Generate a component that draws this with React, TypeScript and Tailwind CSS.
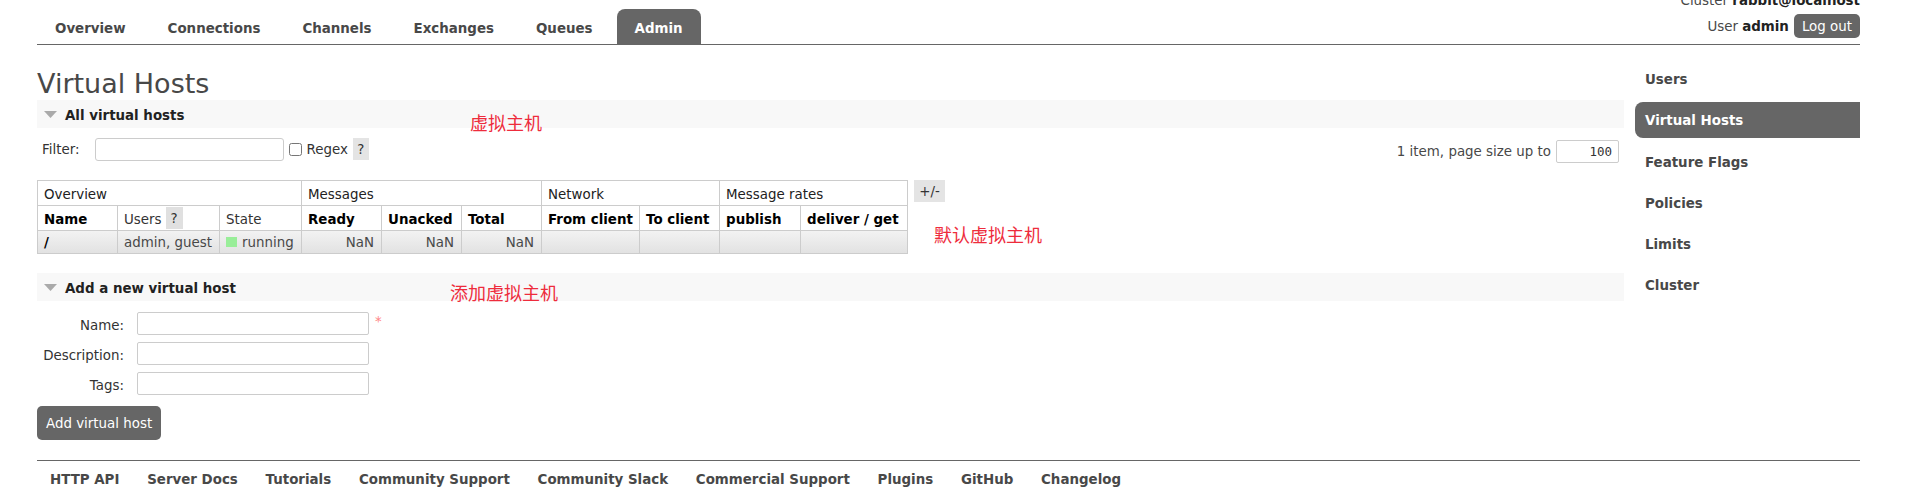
const navItems = ["Overview", "Connections", "Channels", "Exchanges", "Queues", "Admin"];
const sideItems = ["Users", "Virtual Hosts", "Feature Flags", "Policies", "Limits", "Cluster"];
const footerLinks = [
  "HTTP API",
  "Server Docs",
  "Tutorials",
  "Community Support",
  "Community Slack",
  "Commercial Support",
  "Plugins",
  "GitHub",
  "Changelog",
];

function SectionBar({ title }: { title: string }) {
  return (
    <div className="h-[28px] bg-[#f8f8f8] flex items-center pl-[7px]">
      <svg width="13" height="7" viewBox="0 0 13 7" className="mr-[8px]">
        <path d="M0 0H13L6.5 7Z" fill="#aaa" />
      </svg>
      <h2 className="pt-[4px] font-bold text-[#222]">{title}</h2>
    </div>
  );
}

function FormRow({ label, required }: { label: string; required?: boolean }) {
  return (
    <div className="flex items-center h-[23px]">
      <label className="w-[87px] pt-[5px] text-right text-[#333]">{label}</label>
      <input className="ml-[13px] w-[232px] h-[23px] border border-[#ccc] rounded-[2px] bg-white" />
      {required && <span className="ml-[6px] -mt-[4px] text-[#f88]">*</span>}
    </div>
  );
}

function HostsTable() {
  const th = "border border-[#ccc] px-[6px] pt-[4px] text-left";
  return (
    <table className="table-fixed border-collapse w-[870px] whitespace-nowrap">
      <colgroup>
        <col className="w-[80px]" />
        <col className="w-[102px]" />
        <col className="w-[82px]" />
        <col className="w-[80px]" />
        <col className="w-[80px]" />
        <col className="w-[80px]" />
        <col className="w-[98px]" />
        <col className="w-[80px]" />
        <col className="w-[81px]" />
        <col className="w-[107px]" />
      </colgroup>
      <thead>
        <tr className="h-[24px] text-[#222]">
          <th colSpan={3} className={th + " font-normal"}>Overview</th>
          <th colSpan={3} className={th + " font-normal"}>Messages</th>
          <th colSpan={2} className={th + " font-normal"}>Network</th>
          <th colSpan={2} className={th + " font-normal"}>Message rates</th>
        </tr>
        <tr className="h-[25px] text-black">
          <th className={th + " font-bold"}>Name</th>
          <th className="border border-[#ccc] px-[6px] text-left font-normal text-[#333]">
            <div className="flex items-center h-[23px]">
              <span className="pt-[5px]">Users</span>
              <span className="ml-[4px] h-[22px] w-[17px] pt-[3px] bg-[#e0e0e0] flex items-center justify-center">?</span>
            </div>
          </th>
          <th className={th + " font-normal text-[#333]"}>State</th>
          <th className={th + " font-bold"}>Ready</th>
          <th className={th + " font-bold"}>Unacked</th>
          <th className={th + " font-bold"}>Total</th>
          <th className={th + " font-bold"}>From client</th>
          <th className={th + " font-bold"}>To client</th>
          <th className={th + " font-bold"}>publish</th>
          <th className={th + " font-bold"}>deliver / get</th>
        </tr>
      </thead>
      <tbody>
        <tr className="h-[22px] bg-gradient-to-b from-[#f3f3f3] to-[#e2e2e2] text-[#484848]">
          <td className="border border-[#ccc] px-[6px] pt-[2px] font-bold text-black">/</td>
          <td className="border border-[#ccc] px-[6px] pt-[2px]">admin, guest</td>
          <td className="border border-[#ccc] px-[6px]">
            <div className="flex items-center">
              <span className="w-[11px] h-[10px] bg-[#99ee99] mr-[5px]" />
              <span className="pt-[2px]">running</span>
            </div>
          </td>
          <td className="border border-[#ccc] px-[7px] pt-[2px] text-right">NaN</td>
          <td className="border border-[#ccc] px-[7px] pt-[2px] text-right">NaN</td>
          <td className="border border-[#ccc] px-[7px] pt-[2px] text-right">NaN</td>
          <td className="border border-[#ccc]" />
          <td className="border border-[#ccc]" />
          <td className="border border-[#ccc]" />
          <td className="border border-[#ccc]" />
        </tr>
      </tbody>
    </table>
  );
}

export default function App() {
  return (
    <div className="relative w-[1908px] h-[493px] overflow-hidden bg-white text-[13.4px] text-[#484848] font-['DejaVu_Sans',Verdana,sans-serif]">
      <div className="ml-[37px] w-[1823px]">
        <header className="h-[45px] border-b border-[#666] flex justify-between items-end">
          <nav className="flex gap-[6px] items-end">
            {navItems.map((n) => (
              <a
                key={n}
                className={
                  n === "Admin"
                    ? "h-[35px] px-[18px] pt-[5px] flex items-center font-bold text-white bg-[#666] rounded-t-[8px]"
                    : "h-[35px] px-[18px] pt-[5px] flex items-center font-bold text-[#484848]"
                }
              >
                {n}
              </a>
            ))}
          </nav>
          <div className="flex flex-col items-end pb-[6px]">
            <div className="leading-[16px]">
              Cluster <b className="text-[#222]">rabbit@localhost</b>
            </div>
            <div className="mt-[5px] flex items-center gap-[5px]">
              <span className="pt-[3px]">
                User <b className="text-[#222]">admin</b>
              </span>
              <button className="h-[24px] px-[8px] pt-[2px] rounded-[5px] bg-[#666] text-white">Log out</button>
            </div>
          </div>
        </header>

        <div className="flex gap-[11px]">
          <main className="w-[1587px]">
            <h1 className="mt-[22px] leading-[33px] text-[27px] text-[#484848]">Virtual Hosts</h1>
            <SectionBar title="All virtual hosts" />
            <div className="mt-[9.5px] flex justify-between items-start">
              <div className="flex items-center h-[23px] pl-[5px] text-[#333]">
                <label className="w-[52.5px] pt-[3px]">Filter:</label>
                <input className="w-[189px] h-[23px] border border-[#ccc] rounded-[3px]" />
                <input type="checkbox" className="m-0 ml-[5px] w-[13px] h-[13px]" />
                <span className="ml-[5px] pt-[3px]">Regex</span>
                <span className="ml-[5px] h-[22px] w-[16px] pt-[2px] bg-[#e4e4e4] flex items-center justify-center">?</span>
              </div>
              <div className="mt-[2px] mr-[5px] flex items-center gap-[5px]">
                <span className="pt-[2px]">1 item, page size up to</span>
                <input
                  defaultValue="100"
                  className="w-[63px] h-[23px] border border-[#ccc] rounded-[2px] text-right pr-[6px] text-[#333] font-['DejaVu_Sans_Mono',monospace] text-[12.5px]"
                />
              </div>
            </div>

            <div className="mt-[17px] flex items-start gap-[6px]">
              <HostsTable />
              <button className="w-[31px] h-[22px] pt-[2px] bg-[#e4e4e4] text-[#333]">+/-</button>
            </div>

            <div className="mt-[19.5px]">
              <SectionBar title="Add a new virtual host" />
            </div>
            <div className="mt-[11px] flex flex-col gap-[7px]">
              <FormRow label="Name:" required />
              <FormRow label="Description:" />
              <FormRow label="Tags:" />
            </div>
            <button className="mt-[11px] h-[34px] px-[9px] pt-[2px] rounded-[5px] bg-[#666] text-white">Add virtual host</button>
          </main>

          <aside className="w-[225px] mt-[16px] flex flex-col gap-[5.3px]">
            {sideItems.map((s) => (
              <a
                key={s}
                className={
                  s === "Virtual Hosts"
                    ? "h-[36px] pl-[10px] pt-[2px] flex items-center font-bold text-white bg-[#666] rounded-l-[8px]"
                    : "h-[36px] pl-[10px] pt-[2px] flex items-center font-bold text-[#484848]"
                }
              >
                {s}
              </a>
            ))}
          </aside>
        </div>

        <footer className="mt-[20px] border-t border-[#666] h-[36px] pt-[3px] flex items-center gap-[27.75px] pl-[13px]">
          {footerLinks.map((f) => (
            <a key={f} className="font-bold text-[#484848]">
              {f}
            </a>
          ))}
        </footer>
      </div>

      {/* red annotations */}
      <span className="absolute left-[470px] top-[113px] text-[18px] leading-[18px] text-[#ee2c3c] font-['Noto_Sans_CJK_SC',sans-serif]">
        虚拟主机
      </span>
      <span className="absolute left-[934px] top-[225px] text-[18px] leading-[18px] text-[#ee2c3c] font-['Noto_Sans_CJK_SC',sans-serif]">
        默认虚拟主机
      </span>
      <span className="absolute left-[450px] top-[283px] text-[18px] leading-[18px] text-[#ee2c3c] font-['Noto_Sans_CJK_SC',sans-serif]">
        添加虚拟主机
      </span>
    </div>
  );
}
